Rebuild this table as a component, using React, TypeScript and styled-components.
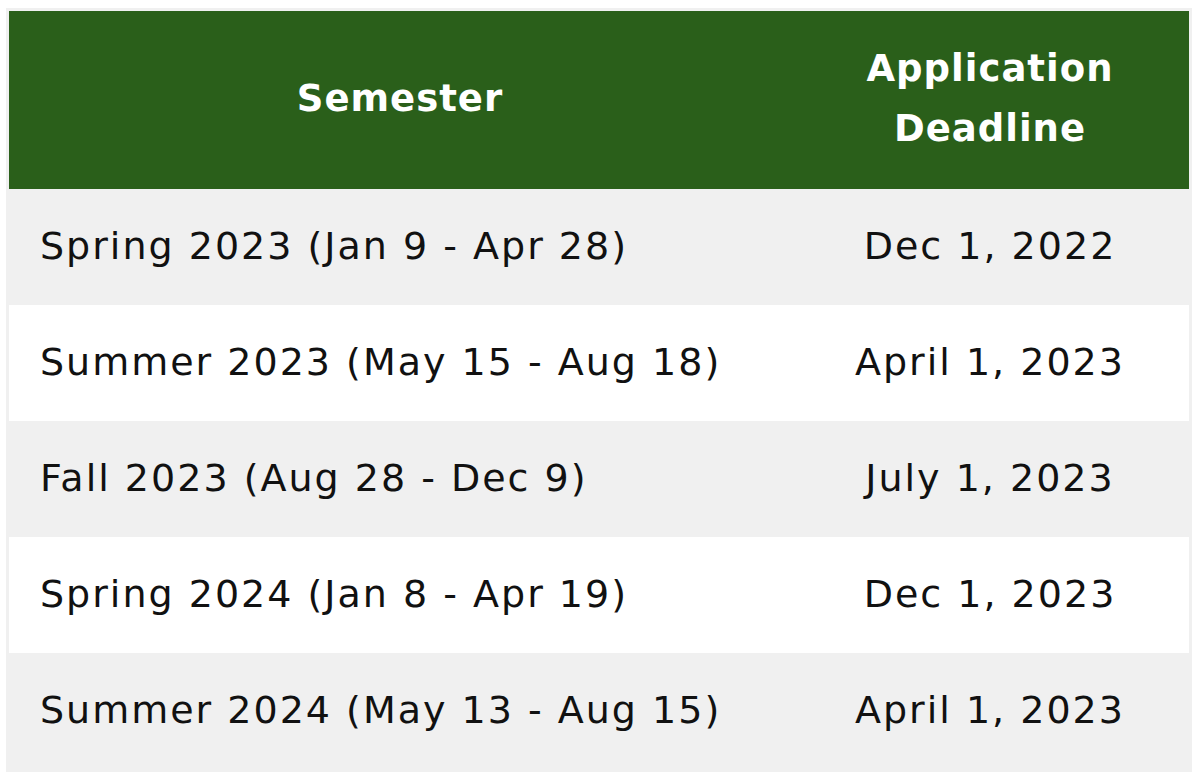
import React from "react";
import styled, { createGlobalStyle } from "styled-components";

const Global = createGlobalStyle`
  html, body { margin: 0; padding: 0; background: #ffffff; }
  body { font-family: "DejaVu Sans", sans-serif; }
`;

const Page = styled.div`
  padding: 8px 8px 0 6px;
  width: 1200px;
  box-sizing: border-box;
`;

const Table = styled.table`
  width: 1186px;
  border-collapse: separate;
  border-spacing: 0;
  border: 3px solid #f0f0f0;
  background: #f0f0f0;
  font-family: "DejaVu Sans", sans-serif;
`;

const HeadCell = styled.th<{ $w: number }>`
  width: ${(p) => p.$w}px;
  height: 178px;
  padding: 0 10px 3px;
  box-sizing: border-box;
  background: #2a5f1a;
  color: #ffffff;
  font-weight: 700;
  font-size: 37px;
  line-height: 60px;
  letter-spacing: 1px;
  text-align: center;
  vertical-align: middle;
`;

const Row = styled.tr<{ $alt: boolean }>`
  background: ${(p) => (p.$alt ? "#ffffff" : "#f0f0f0")};
`;

const Cell = styled.td<{ $center?: boolean }>`
  height: 116px;
  box-sizing: border-box;
  padding: 0 0 3px ${(p) => (p.$center ? "0" : "31px")};
  text-align: ${(p) => (p.$center ? "center" : "left")};
  color: #111111;
  font-size: 38px;
  letter-spacing: 2px;
  vertical-align: middle;
`;

const rows = [
  ["Spring 2023 (Jan 9 - Apr 28)", "Dec 1, 2022"],
  ["Summer 2023 (May 15 - Aug 18)", "April 1, 2023"],
  ["Fall 2023 (Aug 28 - Dec 9)", "July 1, 2023"],
  ["Spring 2024 (Jan 8 - Apr 19)", "Dec 1, 2023"],
  ["Summer 2024 (May 13 - Aug 15)", "April 1, 2023"],
];

export default function App() {
  return (
    <Page>
      <Global />
      <Table>
        <thead>
          <tr>
            <HeadCell $w={782}>Semester</HeadCell>
            <HeadCell $w={398}>
              Application
              <br />
              Deadline
            </HeadCell>
          </tr>
        </thead>
        <tbody>
          {rows.map(([s, d], i) => (
            <Row key={s} $alt={i % 2 === 1}>
              <Cell>{s}</Cell>
              <Cell $center>{d}</Cell>
            </Row>
          ))}
        </tbody>
      </Table>
    </Page>
  );
}
